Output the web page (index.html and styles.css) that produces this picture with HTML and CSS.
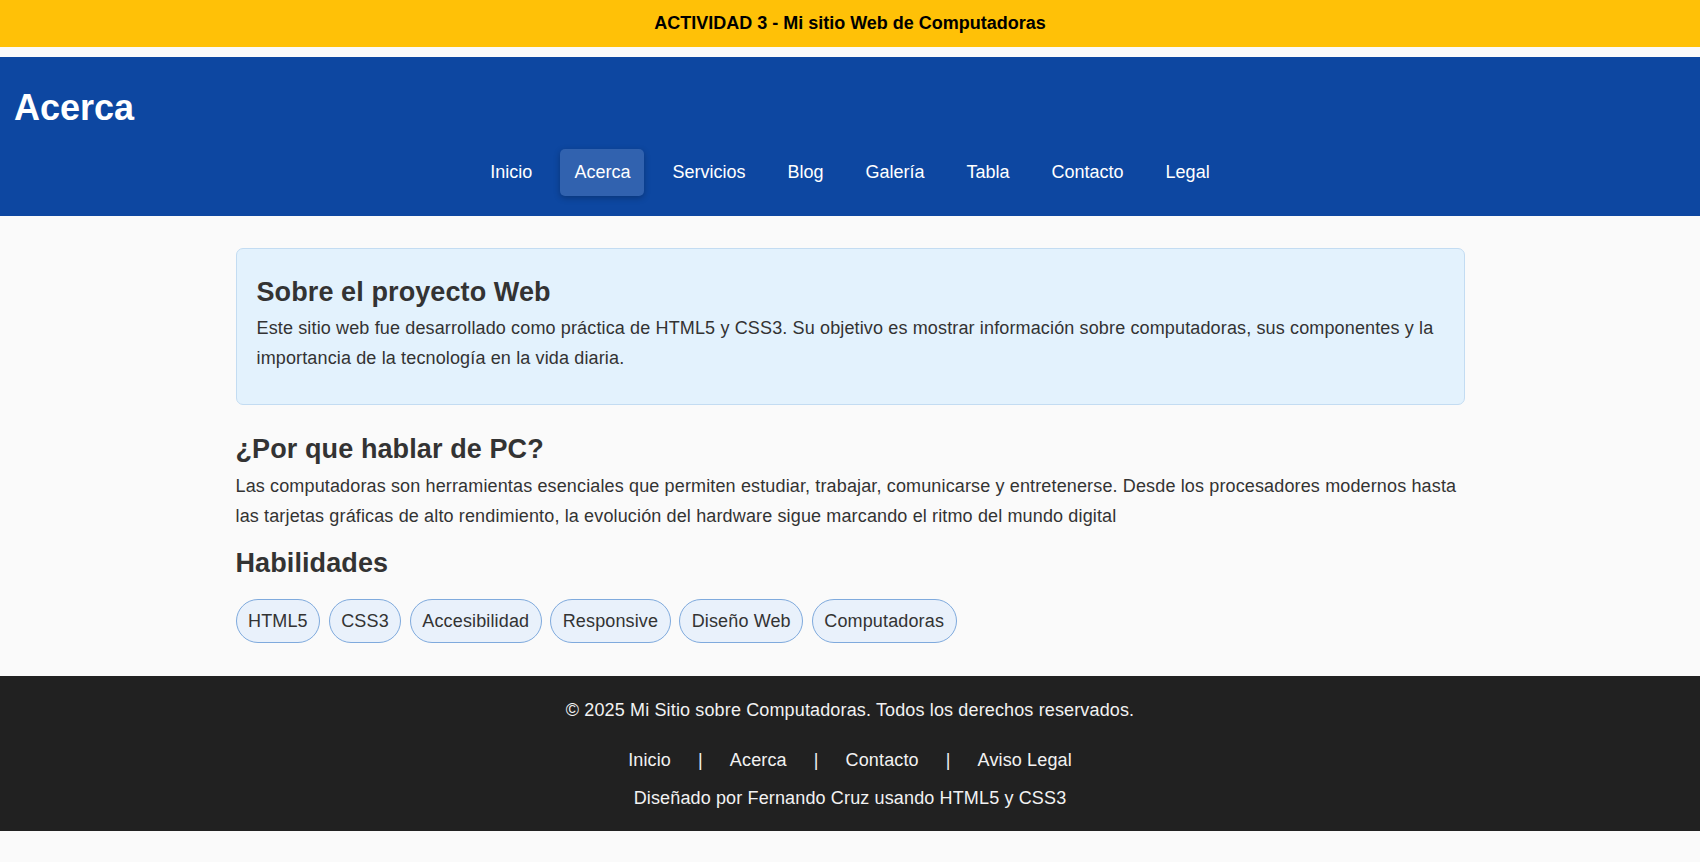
FILE: index.html
```html
<!DOCTYPE html>
<html lang="es">
<head>
<meta charset="utf-8">
<title>Acerca</title>
<link rel="stylesheet" href="styles.css">
</head>
<body>
<div class="topbar">ACTIVIDAD 3 - Mi sitio Web de Computadoras</div>
<header class="site-header">
  <h1 class="page-title">Acerca</h1>
  <nav class="main-nav">
    <a href="#">Inicio</a>
    <a href="#" class="active">Acerca</a>
    <a href="#">Servicios</a>
    <a href="#">Blog</a>
    <a href="#">Galería</a>
    <a href="#">Tabla</a>
    <a href="#">Contacto</a>
    <a href="#">Legal</a>
  </nav>
</header>
<main class="content">
  <section class="card">
    <h2>Sobre el proyecto Web</h2>
    <p>Este sitio web fue desarrollado como práctica de HTML5 y CSS3. Su objetivo es mostrar información sobre computadoras, sus componentes y la importancia de la tecnología en la vida diaria.</p>
  </section>
  <section class="why">
    <h2>¿Por que hablar de PC?</h2>
    <p>Las computadoras son herramientas esenciales que permiten estudiar, trabajar, comunicarse y entretenerse. Desde los procesadores modernos hasta las tarjetas gráficas de alto rendimiento, la evolución del hardware sigue marcando el ritmo del mundo digital</p>
  </section>
  <section class="skills">
    <h2>Habilidades</h2>
    <ul class="chips">
      <li>HTML5</li>
      <li>CSS3</li>
      <li>Accesibilidad</li>
      <li>Responsive</li>
      <li>Diseño Web</li>
      <li>Computadoras</li>
    </ul>
  </section>
</main>
<footer class="site-footer">
  <p class="copy">© 2025 Mi Sitio sobre Computadoras. Todos los derechos reservados.</p>
  <nav class="footer-nav">
    <a href="#">Inicio</a><span class="sep">|</span>
    <a href="#">Acerca</a><span class="sep">|</span>
    <a href="#">Contacto</a><span class="sep">|</span>
    <a href="#">Aviso Legal</a>
  </nav>
  <p class="credit">Diseñado por Fernando Cruz usando HTML5 y CSS3</p>
</footer>
</body>
</html>
```
FILE: styles.css
```css
* { box-sizing: border-box; }

html, body {
  margin: 0;
  padding: 0;
  background: #fafafa;
}

body {
  font-family: "Liberation Sans", Arial, sans-serif;
  font-size: 18px;
  line-height: 30px;
  color: #333333;
}

.topbar {
  height: 47px;
  background: #ffc107;
  color: #000;
  font-weight: bold;
  font-size: 18px;
  line-height: 47px;
  text-align: center;
  margin-bottom: 10px;
}

.site-header {
  background: #0d47a1;
  padding: 30px 14px 20px;
}

.page-title {
  margin: 0 0 20px;
  font-size: 36px;
  line-height: normal;
  color: #fff;
  font-weight: bold;
}

.main-nav {
  display: flex;
  justify-content: center;
  gap: 14px;
}

.main-nav a {
  color: #fff;
  text-decoration: none;
  font-size: 18px;
  line-height: normal;
  padding: 13px 14px;
  border-radius: 5px;
}

.main-nav a.active {
  background: rgba(255, 255, 255, 0.15);
  box-shadow: 0 2px 6px rgba(0, 0, 0, 0.25);
}

.content {
  max-width: 1229px;
  margin: 0 auto;
  padding: 32px 0 33px;
}

.content h2 {
  font-size: 27px;
  line-height: 31px;
  margin: 0 0 5px;
  font-weight: bold;
  letter-spacing: 0.1px;
}

.content p {
  margin: 0;
  letter-spacing: 0.14px;
}

.card {
  background: #e3f2fd;
  border: 1px solid #c3dcf2;
  border-radius: 7px;
  padding: 28px 20px 31px;
}

.why { margin-top: 29px; }
.why p { margin-top: 6px; }

.skills { margin-top: 17px; }

.chips {
  list-style: none;
  margin: 20px 0 0;
  padding: 0;
  display: flex;
  flex-wrap: wrap;
  gap: 8.5px;
}

.chips li {
  padding: 6px 11.5px;
  line-height: 30px;
  border: 1px solid #7faadd;
  background: #e9f1fb;
  border-radius: 999px;
  color: #333;
  letter-spacing: 0.14px;
}

.site-footer {
  background: #212121;
  color: #f2f2f2;
  text-align: center;
  padding: 19px 0 18px;
  letter-spacing: 0.14px;
}

.site-footer p { margin: 0; }

.footer-nav {
  display: flex;
  justify-content: center;
  gap: 27px;
  margin: 20px 0 8px;
}

.footer-nav a {
  color: #f2f2f2;
  text-decoration: none;
}

.sep { color: #f2f2f2; }
```
